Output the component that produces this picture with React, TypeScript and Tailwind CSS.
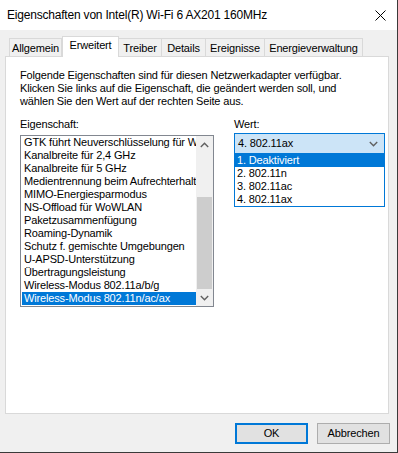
import React from 'react';

const tabs = [
  { label: 'Allgemein', w: 'w-[53px]' },
  { label: 'Erweitert', w: 'w-[57px]', active: true },
  { label: 'Treiber', w: 'w-[43px]' },
  { label: 'Details', w: 'w-[44px]' },
  { label: 'Ereignisse', w: 'w-[59px]' },
  { label: 'Energieverwaltung', w: 'w-[98px]' },
];

const properties = [
  'GTK führt Neuverschlüsselung für WoWLAN durch',
  'Kanalbreite für 2,4 GHz',
  'Kanalbreite für 5 GHz',
  'Medientrennung beim Aufrechterhalten',
  'MIMO-Energiesparmodus',
  'NS-Offload für WoWLAN',
  'Paketzusammenfügung',
  'Roaming-Dynamik',
  'Schutz f. gemischte Umgebungen',
  'U-APSD-Unterstützung',
  'Übertragungsleistung',
  'Wireless-Modus 802.11a/b/g',
  'Wireless-Modus 802.11n/ac/ax',
];

const values = ['1. Deaktiviert', '2. 802.11n', '3. 802.11ac', '4. 802.11ax'];

function Chevron({ up = false }: { up?: boolean }) {
  return (
    <svg width="9" height="6" viewBox="0 0 9 6" className="block">
      <path
        d={up ? 'M0.8 5 L4.5 1.3 L8.2 5' : 'M0.8 1 L4.5 4.7 L8.2 1'}
        fill="none"
        stroke="#606060"
        strokeWidth="1.4"
      />
    </svg>
  );
}

export default function App() {
  return (
    <div
      className="w-[398px] h-[453px] flex flex-col bg-white border-r border-b border-[#3a3a3a] text-black overflow-hidden"
      style={{ fontFamily: '"Liberation Sans", Arial, sans-serif' }}
    >
      {/* title bar */}
      <div className="h-[30px] shrink-0 flex items-center justify-between pl-[7px] pr-[10px]">
        <span className="text-[12px] tracking-[-0.2px]">Eigenschaften von Intel(R) Wi-Fi 6 AX201 160MHz</span>
        <svg width="11" height="11" viewBox="0 0 11 11" className="mr-[1px]">
          <path d="M0.5 0.5 L10.5 10.5 M10.5 0.5 L0.5 10.5" stroke="#000" strokeWidth="1" />
        </svg>
      </div>

      <div className="flex-1 bg-[#f0f0f0] flex flex-col pt-[6px] text-[11px] leading-[13px] tracking-[-0.15px]">
        {/* tabs */}
        <div className="flex items-end h-[20px] pl-[9px] relative z-10">
          {tabs.map((t, i) =>
            t.active ? (
              <div
                key={t.label}
                className={`${t.w} h-[21px] -mb-px bg-white border border-b-0 border-[#d9d9d9] flex items-center justify-center pb-[3px]`}
              >
                {t.label}
              </div>
            ) : (
              <div
                key={t.label}
                className={`${t.w} h-[18px] border-t border-r border-[#d9d9d9] ${i === 0 ? 'border-l' : ''} flex items-center justify-center pt-[1px]`}
              >
                {t.label}
              </div>
            )
          )}
        </div>

        {/* panel */}
        <div className="ml-[5px] w-[384px] h-[358px] bg-white border border-[#d9d9d9] pt-[12px] pl-[14px]">
          <p className="w-[360px]">
            Folgende Eigenschaften sind für diesen Netzwerkadapter verfügbar.
            <br />
            Klicken Sie links auf die Eigenschaft, die geändert werden soll, und
            <br />
            wählen Sie den Wert auf der rechten Seite aus.
          </p>

          <div className="flex mt-[10px]">
            {/* property list */}
            <div className="w-[194px]">
              <div>Eigenschaft:</div>
              <div className="mt-[4px] h-[172px] border border-[#828790] flex">
                <div className="flex-1 pl-px overflow-hidden">
                  {properties.map((p, i) => (
                    <div
                      key={p}
                      className={`h-[13px] pl-[2px] whitespace-nowrap overflow-hidden ${
                        i === properties.length - 1 ? 'bg-[#0078d7] text-white' : ''
                      }`}
                    >
                      {p}
                    </div>
                  ))}
                </div>
                <div className="w-[17px] bg-[#f0f0f0] flex flex-col">
                  <div className="h-[17px] flex items-center justify-center">
                    <Chevron up />
                  </div>
                  <div className="flex-1 flex flex-col justify-end">
                    <div className="h-[92px] mx-px bg-[#cdcdcd]" />
                  </div>
                  <div className="h-[17px] flex items-center justify-center">
                    <Chevron />
                  </div>
                </div>
              </div>
            </div>

            {/* value combo */}
            <div className="ml-[20px] w-[151px]">
              <div>Wert:</div>
              <div className="relative mt-[2px]">
                <div className="h-[21px] border border-[#0078d7] bg-[#cce4f7] flex items-center justify-between pl-[3px] pr-[6px]">
                  <span>4. 802.11ax</span>
                  <Chevron />
                </div>
                <div className="absolute left-0 top-full w-full bg-white border border-[#0078d7] border-t-0 z-20">
                  {values.map((v, i) => (
                    <div
                      key={v}
                      className={`h-[13px] pl-[2px] ${i === 0 ? 'bg-[#0078d7] text-white' : ''}`}
                    >
                      {v}
                    </div>
                  ))}
                </div>
              </div>
            </div>
          </div>
        </div>

        {/* buttons */}
        <div className="flex justify-end gap-[9px] pr-[7px] mt-[9px]">
          <button className="w-[73px] h-[21px] bg-[#e1e1e1] border-2 border-[#0078d7] text-[11px]">OK</button>
          <button className="w-[73px] h-[21px] bg-[#e1e1e1] border border-[#adadad] text-[11px]">Abbrechen</button>
        </div>
      </div>
    </div>
  );
}
